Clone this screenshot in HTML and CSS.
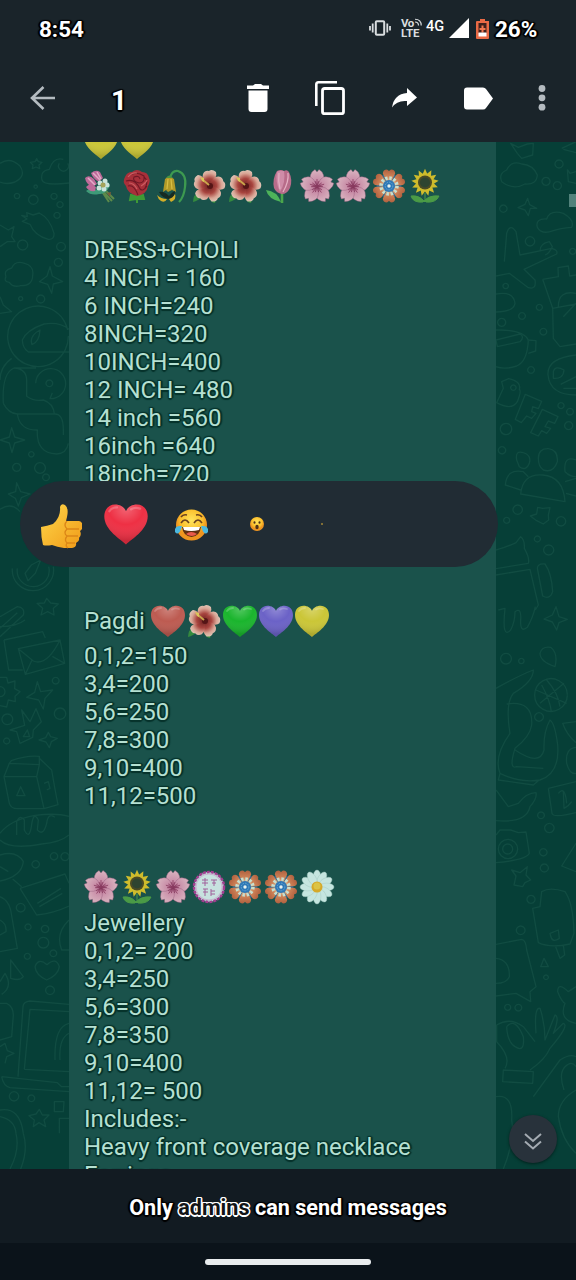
FILE: index.html
```
<!DOCTYPE html>
<html lang="en">
<head>
<meta charset="utf-8">
<title>Chat</title>
<link rel="stylesheet" href="styles.css">
</head>
<body>
<svg class="defs" width="0" height="0" aria-hidden="true">
  <defs>
    <radialGradient id="shine" cx=".5" cy=".1" r=".8"><stop offset="0" stop-color="#fff" stop-opacity=".25"/><stop offset=".5" stop-color="#fff" stop-opacity="0"/><stop offset="1" stop-color="#000" stop-opacity=".15"/></radialGradient>
    <linearGradient id="skin" x2="1" y2="1"><stop offset="0" stop-color="#ffd84a"/><stop offset="1" stop-color="#f09a18"/></linearGradient>
    <radialGradient id="face" cy=".35"><stop offset="0" stop-color="#ffe45c"/><stop offset=".7" stop-color="#fbc02d"/><stop offset="1" stop-color="#ee9420"/></radialGradient>
    <radialGradient id="pinkPetal" cx=".5" cy="1" r="1"><stop offset="0" stop-color="#a0527a"/><stop offset=".4" stop-color="#c98ea8"/><stop offset="1" stop-color="#d9b4c0"/></radialGradient>
    <radialGradient id="redPetal" cx=".5" cy="1" r="1"><stop offset="0" stop-color="#5e1719"/><stop offset=".5" stop-color="#a8453f"/><stop offset=".8" stop-color="#d9a595"/><stop offset="1" stop-color="#dfc3b4"/></radialGradient>
    <linearGradient id="orangePetal" y2="1" x2="0"><stop offset="0" stop-color="#b0603f"/><stop offset=".6" stop-color="#cf8458"/><stop offset="1" stop-color="#dcc09c"/></linearGradient>
  </defs>
  <symbol id="heart" viewBox="0 0 36 36">
    <path d="M18 34C14.500 30.500 1 23 1 12C1 6.500 4.500 2.800 9.500 2.800C13.500 2.800 16.800 5 18 8C19.200 5 22.500 2.800 26.500 2.800C31.500 2.800 35 6.500 35 12C35 23 21.500 30.500 18 34Z" fill="currentColor"/>
    <path d="M18 34C14.500 30.500 1 23 1 12C1 6.500 4.500 2.800 9.500 2.800C13.500 2.800 16.800 5 18 8C19.200 5 22.500 2.800 26.500 2.800C31.500 2.800 35 6.500 35 12C35 23 21.500 30.500 18 34Z" fill="url(#shine)"/>
    <path d="M5 8Q7 5 11 5M22 6.500Q25 4.500 29 6" fill="none" stroke="#fff" stroke-opacity=".22" stroke-width="1.800" stroke-linecap="round"/>
  </symbol>
  <symbol id="bouquet" viewBox="0 0 36 36">
    <path d="M17 20L29 33M18 22L26 34M20 20L31 31" stroke="#5c8a4a" stroke-width="2"/>
    <path d="M24 25L28 24L27 29Z" fill="#7c5b3b"/>
    <path d="M3 23Q9 18 13 22L25 14L27 18Q22 27 16 26Q8 28 3 23Z" fill="#3f9a78"/>
    <path d="M8 5Q13 1 17 4L20 10L16 14Q10 11 8 5ZM2 10Q6 6 11 11L14 16L9 19Q3 16 2 10ZM3 19Q7 14 13 19L12 23Q6 24 3 19Z" fill="#bd6a99"/>
    <path d="M10 5L17 12M5 10L12 17M14 4L18 11" stroke="#e3abc7" stroke-width="1.500"/>
    <g fill="#c9e3da"><circle cx="17" cy="15" r="2.500"/><circle cx="22" cy="13" r="2.500"/><circle cx="24" cy="17" r="2.500"/><circle cx="21" cy="21" r="2.500"/><circle cx="16" cy="20" r="2.500"/></g>
    <circle cx="20" cy="17" r="2.500" fill="#a4a35a"/>
  </symbol>
  <symbol id="rose" viewBox="0 0 36 36">
    <path d="M18 25V35M17 31L11 32L12 27L17 28L24 27L25 31L19 31" fill="#3f9a35" stroke="#3f9a35" stroke-width="2"/>
    <path d="M6 9Q8 4 13 4Q18 0 23 4Q29 4 30 10Q32 13 29 18Q28 26 18 28Q8 25 7 18Q3 14 6 9Z" fill="#a8303a"/>
    <path d="M7 13Q16 10 21 21Q24 24 28 18M11 7Q18 3 25 8Q26 15 20 15Q13 13 15 9Q20 7 21 11M9 18Q15 16 19 27M25 9Q30 13 26 20" fill="none" stroke="#711825" stroke-width="1.100"/>
    <path d="M9 9Q13 4 18 5M22 18Q27 15 28 12M10 15Q15 15 18 21" stroke="#cc5c60" stroke-width="1.200" fill="none"/>
  </symbol>
  <symbol id="wilted" viewBox="0 0 36 36">
    <path d="M15 10Q17 2 23 3Q32 6 30 19Q29 29 24 34" fill="none" stroke="#3d9a50" stroke-width="2.200"/>
    <path d="M10 11Q14 7 19 11L21 24L17 22L13 24L11 22L8 24Z" fill="#b29a27"/>
    <path d="M13 11L12 21M16 11L17 21" stroke="#d7bf45" stroke-width="1.200"/>
    <path d="M4 24Q9 23 14 28Q17 24 20 23Q20 30 14 31Q7 30 4 24Z" fill="#172b22"/>
    <path d="M2 27Q6 31 12 31Q10 35 6 33Q3 31 2 27ZM14 31Q18 30 20 26Q22 31 16 34Z" fill="#d3ae28"/>
    <path d="M11 10Q14 5 18 10Z" fill="#4a9441"/>
  </symbol>
  <symbol id="hibiscus" viewBox="0 0 36 36">
    <path d="M2 34Q2 26 9 24L12 28Q7 33 2 34ZM18 29L26 29L24 35Q20 35 18 29Z" fill="#358a3f"/>
    <g fill="url(#redPetal)"><path id="hp" d="M18 19Q10 11 12 6Q14 2 18 3Q21 .500 25 4Q27 9 18 19Z"/>
    <use href="#hp" transform="rotate(72 18 18)"/><use href="#hp" transform="rotate(144 18 18)"/><use href="#hp" transform="rotate(216 18 18)"/><use href="#hp" transform="rotate(288 18 18)"/></g>
    <circle cx="19" cy="18" r="3" fill="#541516"/><path d="M18 17L12 12" stroke="#caa34b" stroke-width="2"/><path d="M9 9L13 10L13 14L11 13Z" fill="#dac75a"/>
  </symbol>
  <symbol id="tulip" viewBox="0 0 36 36">
    <path d="M19 23V35" stroke="#4aa64b" stroke-width="2.600"/><path d="M18 34Q5 31 3 22Q14 23 18 34Z" fill="#4db35a"/>
    <path d="M14 3Q18 1 21 3Q24 1 26 4Q30 12 27 20Q24 26 19 26Q13 25 11 20Q9 11 14 3Z" fill="#b86c8a"/>
    <path d="M14 4Q12 13 17 24Q23 14 21 3Q16 2 14 4Z" fill="#cf8ca8"/><path d="M16 5Q15 13 17 21M25 5Q26 14 20 24" stroke="#e5b0c3" fill="none" stroke-width="1.200"/>
  </symbol>
  <symbol id="blossom" viewBox="0 0 36 36">
    <g fill="url(#pinkPetal)" stroke="#92587a" stroke-width=".4"><path id="bp" d="M18 19Q9.500 12 11.500 7Q13 3 16 1.500L18 4L20 1.500Q23 3 24.500 7Q26.500 12 18 19Z"/>
    <use href="#bp" transform="rotate(72 18 18.500)"/><use href="#bp" transform="rotate(144 18 18.500)"/><use href="#bp" transform="rotate(216 18 18.500)"/><use href="#bp" transform="rotate(288 18 18.500)"/></g>
    <g stroke="#843459" stroke-width=".7"><path id="bs" d="M18 18V11M18 18L16 13M18 18L20 13"/><use href="#bs" transform="rotate(72 18 18.500)"/><use href="#bs" transform="rotate(144 18 18.500)"/><use href="#bs" transform="rotate(216 18 18.500)"/><use href="#bs" transform="rotate(288 18 18.500)"/></g>
  </symbol>
  <symbol id="rosette" viewBox="0 0 36 36">
    <circle cx="18" cy="18" r="12.500" fill="#36698c"/>
    <g fill="url(#orangePetal)"><path id="op" d="M16 14L11.800 5.500Q12 1.500 16 1.500L18 3L20 1.500Q24 1.500 24.200 5.500L20 14Z"/>
    <use href="#op" transform="rotate(60 18 18)"/><use href="#op" transform="rotate(120 18 18)"/><use href="#op" transform="rotate(180 18 18)"/><use href="#op" transform="rotate(240 18 18)"/><use href="#op" transform="rotate(300 18 18)"/></g>
    <circle cx="18" cy="18" r="8" fill="none" stroke="#c8dfce" stroke-width="3.500" stroke-dasharray="2.400 1.800"/>
    <circle cx="18" cy="18" r="6" fill="#2e78b7"/><circle cx="18" cy="18" r="3.800" fill="none" stroke="#68a9cf" stroke-dasharray="1.500 1"/><circle cx="18" cy="18" r="1.700" fill="#e8f3ef"/>
  </symbol>
  <symbol id="sunflower" viewBox="0 0 36 36">
    <path d="M18 25V34M16 34Q6 35 4 28Q12 27 17 33Q22 27 32 28Q29 35 19 34" fill="#4a9a46" stroke="#4a9a46"/>
    <g fill="#cfbc2c"><path id="sp" d="M14.800 8L18 .800L21.200 8L18 15Z"/><use href="#sp" transform="rotate(27.700 18 14.500)"/><use href="#sp" transform="rotate(55.400 18 14.500)"/><use href="#sp" transform="rotate(83 18 14.500)"/><use href="#sp" transform="rotate(110.800 18 14.500)"/><use href="#sp" transform="rotate(138.500 18 14.500)"/><use href="#sp" transform="rotate(166 18 14.500)"/><use href="#sp" transform="rotate(194 18 14.500)"/><use href="#sp" transform="rotate(221.500 18 14.500)"/><use href="#sp" transform="rotate(249 18 14.500)"/><use href="#sp" transform="rotate(277 18 14.500)"/><use href="#sp" transform="rotate(304.600 18 14.500)"/><use href="#sp" transform="rotate(332 18 14.500)"/></g>
    <circle cx="18" cy="14.500" r="7" fill="#4b4b25"/><circle cx="18" cy="14.500" r="5" fill="#2e4430"/>
  </symbol>
  <symbol id="stamp" viewBox="0 0 36 36">
    <circle cx="18" cy="18" r="15" fill="#bed9d9" stroke="#a33f91" stroke-width="2.500" stroke-dasharray="3 1"/>
    <circle cx="18" cy="18" r="13" fill="#c7e2df" stroke="#c9a9cb" stroke-width=".8"/>
    <path d="M11 11H17M14 9V17M11 14H17M20 11H26M21 14H25M23 11V17M12 20H17M12 23H17M14 20V27M20 20V27M20 22H24M20 25H24" fill="none" stroke="#a0609a" stroke-width="1"/>
  </symbol>
  <symbol id="daisy" viewBox="0 0 36 36">
    <circle cx="18" cy="18" r="12" fill="#a9cfc8"/>
    <g fill="#c5e5df" stroke="#9fc6be" stroke-width=".4"><ellipse id="d1" cx="18" cy="8.500" rx="3.900" ry="7.500"/><use href="#d1" transform="rotate(30 18 18)"/><use href="#d1" transform="rotate(60 18 18)"/><use href="#d1" transform="rotate(90 18 18)"/><use href="#d1" transform="rotate(120 18 18)"/><use href="#d1" transform="rotate(150 18 18)"/><use href="#d1" transform="rotate(180 18 18)"/><use href="#d1" transform="rotate(210 18 18)"/><use href="#d1" transform="rotate(240 18 18)"/><use href="#d1" transform="rotate(270 18 18)"/><use href="#d1" transform="rotate(300 18 18)"/><use href="#d1" transform="rotate(330 18 18)"/></g>
    <circle cx="18" cy="18" r="5.500" fill="#d5a929"/><circle cx="18" cy="17" r="3.500" fill="#dcc344"/>
  </symbol>
</svg>

<div class="screen">
  <header class="top">
    <div class="status">
      <span class="clock">8:54</span>
      <div class="status-icons">
        <svg class="vibrate" viewBox="0 0 22 16"><g fill="none" stroke="#d9dddf"><rect x="6.800" y="1.300" width="8.400" height="13.400" rx="1" stroke-width="2"/><path d="M3.700 3.500V12.500M18.300 3.500V12.500M1 6V10.500M21 6V10.500" stroke-width="1.800"/></g></svg>
        <span class="volte"><span class="vo">Vo<svg viewBox="0 0 9 9"><path d="M0 1Q8 1 8 9M0 4.500Q4.500 4.500 4.500 9" fill="none" stroke="currentColor" stroke-width="1.500"/></svg></span><span>LTE</span></span>
        <span class="net">4G</span>
        <svg class="signal" viewBox="0 0 20 20"><path d="M20 0V20H0Z" fill="#fff"/></svg>
        <svg class="battery" viewBox="0 0 13 21"><path d="M4 1H9V3H13V20Q13 21 12 21H1Q0 21 0 20V4Q0 3 1 3H4Z" fill="#e96a45"/><path d="M2.500 5H10.500V15H2.500Z" fill="#40201b"/><path d="M6.500 7.500V14.500M3.500 11H9.500" stroke="#f17850" stroke-width="2"/><path d="M2.500 14.500H10.500V18.500H2.500Z" fill="#fff"/></svg>
        <span class="percent">26%</span>
      </div>
    </div>
    <div class="toolbar">
      <svg class="back" viewBox="0 0 26 26"><path d="M25 13H2M13.500 2L2 13L13.500 24" fill="none" stroke="#b4bbc0" stroke-width="2.600"/></svg>
      <span class="count">1</span>
      <svg class="trash" viewBox="0 0 22 28"><path d="M0 1.500H6L8 0H14L16 1.500H22V5H0ZM1.500 6.500H20.500V25Q20.500 28 17.500 28H4.500Q1.500 28 1.500 25Z" fill="#fff"/></svg>
      <svg class="copy" viewBox="0 0 30 34"><path d="M22 1.300H3.500Q1.300 1.300 1.300 3.500V25" fill="none" stroke="#fff" stroke-width="2.600"/><rect x="7.500" y="7.500" width="21" height="25.200" rx="2.300" fill="none" stroke="#fff" stroke-width="2.800"/></svg>
      <svg class="forward" viewBox="0 0 25 20"><path d="M15 0L25 9.500L15 18V13Q5 12 0 19.500Q2 6 15 5Z" fill="#fff"/></svg>
      <svg class="label" viewBox="0 0 29 23"><path d="M3 .500H19Q21 .500 22 2L29 11.500L22 21Q21 22.500 19 22.500H3Q0 22.500 0 19.500V3.500Q0 .500 3 .500Z" fill="#fff"/></svg>
      <svg class="more" viewBox="0 0 8 26"><g fill="#b4bbc0"><circle cx="4" cy="3.500" r="3.400"/><circle cx="4" cy="12.800" r="3.400"/><circle cx="4" cy="22.200" r="3.400"/></g></svg>
    </div>
  </header>

  <main class="chat">
    <svg class="doodles" viewBox="0 6 207 3081" preserveAspectRatio="none">
      <path d="M0 70Q30 50 60 78Q80 108 45 126Q20 135 0 126M126 120Q120 92 148 88Q160 50 190 58M126 120Q130 138 207 129M178 70a15 15 0 1 0 25 0M80 218L99 225L118 219Q150 235 162 280Q163 300 145 298Q104 288 90 253L67 244L81 237L65 226L82 230ZM18 410Q10 390 35 384Q45 360 74 370Q103 378 98 406Q98 438 62 437Q38 443 28 427Q10 425 18 410M205 588A91 91 0 1 1 203 570M207 568Q180 545 132 552Q80 570 67 600Q68 625 85 636H207M94 606Q92 585 120 570Q118 606 96 614ZM107 730A45 45 0 1 1 150 776L157 758M10 790Q5 700 42 684Q80 686 80 722V769Q102 785 130 780Q160 790 163 822H52Q25 820 10 790M0 720Q0 680 35 655M42 684H108M52 822Q60 872 112 870Q108 940 170 942Q200 940 205 910M163 822Q190 820 190 870V885M35 863L44 891L74 900L44 909L36 938L28 909L0 900L28 891ZM150 380L157 408L188 425L160 432L155 460L143 433L118 425L141 408ZM50 1028L62 1055L90 1062L64 1073L55 1098L46 1075L25 1062L47 1055ZM0 1108Q35 1085 60 1115M37 1285A62 62 0 1 0 160 1280M52 1285A48 48 0 1 0 146 1280M75 1300L94 1275L122 1260L106 1300L84 1322ZM140 1375L152 1389L175 1392L160 1405L162 1425L143 1415L123 1425L128 1405L111 1390L133 1389ZM0 1430L52 1400Q76 1402 70 1425L0 1490M0 1465L52 1418M0 1460Q50 1460 75 1440M12 1500L128 1475L136 1494M12 1500L26 1590L68 1590M55 1526L180 1500L194 1570L76 1603ZM55 1526L100 1563Q140 1580 180 1500M76 1603L96 1560M194 1570L157 1549M0 1612L20 1612L24 1629L45 1623L44 1646L60 1655L45 1669L46 1685L25 1680L20 1701L0 1697M0 1640a15 15 0 1 1 0 30M112 1625L122 1655L158 1650L135 1675L130 1707L116 1680L80 1672L104 1657ZM65 1710L90 1745L108 1706L124 1745L100 1770L98 1792L60 1810L50 1775L30 1770L74 1756ZM82 1770L70 1790H89ZM145 1777L152 1790L172 1795L154 1805L148 1823L138 1806L117 1800L137 1793ZM34 1862Q80 1845 118 1849V1874L28 1870ZM28 1870L12 1910L28 1990Q33 2007 55 2006H132L110 1910H12M118 1874L110 1910M118 1855L155 1890Q165 1950 174 1994L132 2006M62 1940L50 1967H75ZM132 1930L145 1925L150 1945L140 1950M0 2080Q30 2040 105 2026Q170 2018 207 2029M0 2100Q30 2130 125 2112Q180 2108 207 2085M50 2085V2045Q60 2022 73 2040V2070Q88 2100 94 2060Q100 2010 115 2040L112 2070Q130 2090 140 2050Q144 2016 165 2032M0 2145Q50 2130 70 2165Q65 2210 0 2223M0 2180L25 2195M38 2217L65 2240M60 2245L195 2202L207 2230M60 2245L110 2325Q160 2320 207 2298M112 2290L183 2245M118 2300L187 2260M0 2270Q25 2280 32 2310L52 2425L0 2435M0 2340Q20 2350 18 2375L0 2385M207 2340Q165 2380 185 2430L207 2430M32 2460L70 2510Q60 2524 32 2515ZM105 2480Q115 2452 141 2474Q168 2450 178 2480Q175 2505 140 2520Q107 2505 105 2480M0 2525L15 2500Q40 2540 5 2563M0 2590L20 2590Q40 2600 40 2625L35 2690L0 2700M54 2810L69 2600Q70 2585 90 2583L207 2593M73 2788L90 2608L207 2615M73 2788L207 2795M165 2760Q162 2660 207 2650M180 2760Q176 2695 207 2680M5 2810L172 2828L185 2840H207M5 2810Q10 2838 30 2843L207 2855M0 2910Q60 2900 70 2980M0 2930Q45 2940 48 2980M118 2908L127 2925L147 2925L132 2940L137 2960L117 2948L100 2960L103 2940L87 2927L108 2922ZM163 2915V2885H192L190 2915ZM178 2980V2935H207M0 255L25 270L42 260L35 290L45 305L22 305L0 320M0 470L10 495L35 515L0 520M0 2720L15 2710L22 2732L42 2740L20 2750L15 2770M48 2980Q60 3030 30 3087M70 2980Q85 3030 62 3087"/>
      <path d="M105 65l5-9 5 9 11 2-9 8 2 11-11-5-11 5 2-11-8-8zM51 160a8 8 0 1 0 .1 0M100 165a14 14 0 1 0 .1 0M107 135a5 5 0 1 0 .1 0M162 160a9 9 0 1 0 .1 0M180 185a9 9 0 1 0 .1 0M171 217a9 9 0 1 0 .1 0M68 300a15 15 0 1 0 .1 0M183 307a13 13 0 1 0 .1 0M175 355a12 12 0 1 0 .1 0M122 465a12 12 0 1 0 .1 0M62 470a6 6 0 1 0 .1 0M50 970a12 12 0 1 0 .1 0M120 968a16 16 0 1 0 .1 0M138 1002a10 10 0 1 0 .1 0M94 935a8 8 0 1 0 .1 0M22 1722a16 16 0 1 0 .1 0M180 1704a17 17 0 1 0 .1 0M167 1612a10 10 0 1 0 .1 0M20 1794a9 9 0 1 0 .1 0M107 2162a11 11 0 1 0 .1 0M162 2138a11 11 0 1 0 .1 0M195 2138a12 12 0 1 0 .1 0M62 2290a13 13 0 1 0 .1 0M84 2352a9 9 0 1 0 .1 0M135 2356a11 11 0 1 0 .1 0M130 2392a16 16 0 1 0 .1 0M160 2430a10 10 0 1 0 .1 0M82 2440a9 9 0 1 0 .1 0M150 2538a13 13 0 1 0 .1 0M42 2855a14 14 0 1 0 .1 0M94 2865a10 10 0 1 0 .1 0M148 720a10 10 0 1 0 .1 0"/>
    </svg>
    <article class="bubble">
      <div class="emoji-row first"><svg class="yellow"><use href="#heart"/></svg><svg class="yellow"><use href="#heart"/></svg></div>
      <div class="emoji-row"><svg><use href="#bouquet"/></svg><svg><use href="#rose"/></svg><svg><use href="#wilted"/></svg><svg><use href="#hibiscus"/></svg><svg><use href="#hibiscus"/></svg><svg><use href="#tulip"/></svg><svg><use href="#blossom"/></svg><svg><use href="#blossom"/></svg><svg><use href="#rosette"/></svg><svg><use href="#sunflower"/></svg></div>
      <div class="lines dress">
        <p>DRESS+CHOLI</p><p>4 INCH = 160</p><p>6 INCH=240</p><p>8INCH=320</p><p>10INCH=400</p><p>12 INCH= 480</p><p>14 inch =560</p><p>16inch =640</p><p>18inch=720</p>
      </div>
      <div class="emoji-row pagdi"><span>Pagdi</span><svg class="red"><use href="#heart"/></svg><svg><use href="#hibiscus"/></svg><svg class="green"><use href="#heart"/></svg><svg class="purple"><use href="#heart"/></svg><svg class="yellow"><use href="#heart"/></svg></div>
      <div class="lines">
        <p>0,1,2=150</p><p>3,4=200</p><p>5,6=250</p><p>7,8=300</p><p>9,10=400</p><p>11,12=500</p>
      </div>
      <div class="emoji-row jewels"><svg><use href="#blossom"/></svg><svg><use href="#sunflower"/></svg><svg><use href="#blossom"/></svg><svg><use href="#stamp"/></svg><svg><use href="#rosette"/></svg><svg><use href="#rosette"/></svg><svg><use href="#daisy"/></svg></div>
      <div class="lines">
        <p>Jewellery</p><p>0,1,2= 200</p><p>3,4=250</p><p>5,6=300</p><p>7,8=350</p><p>9,10=400</p><p>11,12= 500</p><p>Includes:-</p><p>Heavy front coverage necklace</p><p>Earrings</p>
      </div>
    </article>
    <svg class="doodles" viewBox="18 6 240 3081" preserveAspectRatio="none">
      <path d="M62 10L85 22L112 12L130 10L128 45L95 55L82 40ZM215 25L258 5M220 28L258 38M35 125Q25 100 50 90Q65 60 95 72Q130 75 142 105Q140 135 105 132Q70 152 35 125M142 262Q135 235 170 237Q180 208 220 220Q255 240 245 262Q210 265 190 272Q155 285 142 262M232 88L240 100L258 95M232 88L235 125L258 130M113 175L119 194L140 205L121 205L115 227L105 210L84 203L105 193ZM43 365L50 280Q60 248 78 275L90 345L185 325Q205 330 200 342L102 388L135 420Q140 450 115 443L58 400L18 408M150 333Q150 310 178 305L187 320Q178 340 165 345M158 418L205 410L204 383L235 378L239 408L258 405M158 418L188 505L190 595L210 620L258 612M188 505L258 492M205 500Q205 450 258 460M220 530L258 490M18 462Q70 452 75 490Q72 515 18 516M18 570Q100 568 115 600Q112 665 80 678Q45 690 18 680M112 600L138 602L137 633L115 640M22 620L18 600L90 582Q105 590 90 605ZM258 645Q170 655 174 705Q180 765 258 765M190 695Q195 675 222 690Q220 718 190 715ZM212 733L258 710M220 745L258 745M35 725L56 716Q95 725 88 748Q95 752 82 785Q65 813 20 788L40 745ZM106 763L155 784L145 806L128 800L125 815L138 820L125 835L110 828L94 848L76 838ZM157 808L204 830L194 850L175 843L165 860L182 865L170 880L155 872L145 888L122 878ZM80 960Q75 930 100 938Q125 945 118 970Q108 995 88 980ZM145 955Q145 925 175 926Q205 930 202 965Q190 1000 160 990Q145 980 145 955M92 1062Q98 1000 158 1005Q220 1010 225 1085ZM92 1050L46 1035Q50 985 100 995L115 1010M258 960Q220 945 225 995Q240 1010 258 1010M225 1025L258 1015M228 1060L258 1068M143 1102L158 1105L180 1103L175 1125L176 1140L160 1152L140 1142L121 1128L140 1122ZM18 1230Q65 1215 78 1208L92 1190Q105 1200 103 1225Q120 1255 115 1270L18 1286M18 1305L120 1288L145 1395L136 1410M25 1410L45 1405Q35 1500 62 1470Q75 1445 75 1415Q95 1400 92 1440Q90 1480 112 1462Q130 1430 136 1400M143 1290Q138 1270 165 1272Q185 1300 188 1355Q180 1380 158 1368ZM198 1400L207 1430L232 1438L207 1448L200 1470L187 1446L162 1437L187 1425ZM150 1540Q155 1518 182 1522Q205 1540 195 1580Q150 1565 150 1540M232 1666A49 49 0 1 1 232 1664M138 1650L230 1690M150 1690Q180 1665 222 1630M170 1620Q205 1660 210 1700M155 1635Q180 1680 184 1715M18 1645Q90 1605 130 1590Q130 1625 70 1660Q45 1690 60 1780Q10 1850 30 1900Q90 1930 150 1920Q210 1900 203 1815Q195 1750 180 1740Q160 1775 162 1830Q150 1880 75 1830M50 1692Q130 1680 125 1755Q120 1790 75 1825Q55 1890 80 1880L160 1885M30 1900L25 1920L130 1935L145 1922M258 1745L218 1750Q230 1785 258 1808M258 1822Q225 1825 230 1870Q240 1905 258 1900M175 1945L258 1925M175 1945L186 2020Q190 2035 258 2018M205 1960Q225 1935 230 1990M220 1955L222 2005Q235 2000 245 1985M18 1950L55 2000L85 1990Q110 1958 138 1958Q142 1975 120 2000Q110 2050 18 2042M18 2085L30 2070H62L85 2078L108 2076L118 2140Q110 2160 18 2168M25 2127A29 29 0 1 0 83 2127A29 29 0 1 0 25 2127M38 2127A15 15 0 1 0 68 2127A15 15 0 1 0 38 2127M258 2110L215 2178L258 2195M65 2190L90 2198L112 2180L108 2205L122 2220L105 2228L98 2240L72 2235L78 2208ZM155 2255Q180 2240 225 2255Q250 2290 252 2380L240 2412Q180 2425 145 2408L128 2305L150 2300ZM180 2380L205 2370L208 2395Q187 2410 182 2388ZM197 2420L210 2455L224 2445L220 2415M18 2413L95 2398Q108 2400 110 2430L138 2540L120 2555L122 2585L78 2560L18 2568M18 2455Q60 2460 58 2510Q50 2530 18 2530M258 2540L235 2555Q203 2525 203 2555Q215 2585 225 2590Q205 2640 258 2650M45 2785Q65 2752 20 2705V2655Q60 2630 100 2660L135 2705M50 2660Q75 2630 100 2690Q105 2740 75 2720Q52 2705 50 2660M138 2680Q132 2600 150 2605Q165 2650 165 2700L195 2625Q210 2630 190 2680L220 2650Q240 2655 180 2725Q165 2760 120 2790M40 2790L130 2795L128 2830L38 2825ZM130 2870L210 2760Q240 2740 258 2750M222 2850Q205 2800 225 2780Q245 2760 258 2780M18 2870Q70 2860 65 2940M205 2930Q205 2880 258 2850M65 2940Q75 3000 40 3087M205 2930Q215 3000 258 3040"/>
      <path d="M207 60a12 12 0 1 0 .1 0M168 112a12 12 0 1 0 .1 0M202 125a12 12 0 1 0 .1 0M40 195a11 11 0 1 0 .1 0M120 290a14 14 0 1 0 .1 0M248 325a9 9 0 1 0 .1 0M47 430a8 8 0 1 0 .1 0M148 493a9 9 0 1 0 .1 0M96 518a10 10 0 1 0 .1 0M35 535a12 12 0 1 0 .1 0M160 565a10 10 0 1 0 .1 0M123 680a10 10 0 1 0 .1 0M213 788a9 9 0 1 0 .1 0M240 805a10 10 0 1 0 .1 0M236 845a12 12 0 1 0 .1 0M48 850a17 17 0 1 0 .1 0M36 920a11 11 0 1 0 .1 0M83 1095a14 14 0 1 0 .1 0M50 1132a9 9 0 1 0 .1 0M213 1130a14 14 0 1 0 .1 0M142 1188a9 9 0 1 0 .1 0M176 1215a15 15 0 1 0 .1 0M48 1540a16 16 0 1 0 .1 0M94 1555a8 8 0 1 0 .1 0M147 1718a13 13 0 1 0 .1 0M153 2016a10 10 0 1 0 .1 0M178 2050a14 14 0 1 0 .1 0M160 2126a11 11 0 1 0 .1 0M163 2172a12 12 0 1 0 .1 0M123 2266a12 12 0 1 0 .1 0M92 2358a13 13 0 1 0 .1 0M162 2455l-10 25h23zM168 2505a7 7 0 1 0 .1 0M53 2593a9 9 0 1 0 .1 0M85 2593a10 10 0 1 0 .1 0M70 735a8 8 0 1 0 .1 0"/>
    </svg>

    <div class="reactions">
      <svg class="thumb" viewBox="0 0 41 45"><path d="M0 23Q6 22 12 20Q20 13 19 3Q20-1 24 1Q28 4 26 13L25 17H38Q42 18 41 22Q42 25 39 27Q41 31 38 34Q39 37 35 39Q36 43 31 44H23Q16 43 11 41Q5 42 2 41Q0 33 0 23Z" fill="url(#skin)"/><path d="M26 17Q22 21 26 25H38M26 25Q22 29 26 32H37M26 32Q23 36 26 39H34M26 39Q24 42 27 44" fill="none" stroke="#db8617" stroke-width="1.300"/></svg>
      <svg class="love"><use href="#heart"/></svg>
      <svg class="joy" viewBox="0 0 33 33"><circle cx="16.500" cy="16" r="15.500" fill="url(#face)"/><path d="M6 14Q10 8 14 14M19 14Q23 8 27 14M6 8Q8 5 12 6M21 6Q25 5 27 8" fill="none" stroke="#69401f" stroke-width="1.600"/><path d="M7 18H26Q25 27 16.500 28Q8 27 7 18Z" fill="#603010"/><path d="M8 18H25L24 21Q16 23 9 21Z" fill="#fff"/><path d="M11 25Q16 21 22 25Q17 29 11 25Z" fill="#e95a4b"/><path d="M7 17Q-1 16 0 23Q4 28 7 17ZM26 17Q34 16 33 23Q29 28 26 17Z" fill="#4bb8df"/></svg>
      <svg class="wow" viewBox="0 0 14 14"><circle cx="7" cy="7" r="7" fill="url(#face)"/><ellipse cx="4.500" cy="5.500" rx="1" ry="1.300" fill="#4e3018"/><ellipse cx="9.500" cy="5.500" rx="1" ry="1.300" fill="#4e3018"/><ellipse cx="7" cy="10" rx="1.700" ry="2.300" fill="#4e3018"/></svg>
      <svg class="speck" viewBox="0 0 2 2"><circle cx="1" cy="1" r="1" fill="#a08436"/></svg>
    </div>
    <div class="scroll-thumb"></div>
    <div class="jump"><svg viewBox="0 0 18 17"><path d="M1 1L9 8L17 1M1 8.500L9 15.500L17 8.500" fill="none" stroke="#a4abb2" stroke-width="2"/></svg></div>
  </main>

  <footer class="notice"><p>Only <span class="admins">admins</span> can send messages</p></footer>
  <div class="nav"><div class="pill"></div></div>
</div>
</body>
</html>
```
FILE: styles.css
```
* { box-sizing: border-box; }
body { margin: 0; background: #0b141b; font-family: Roboto, "Liberation Sans", sans-serif; }
p { margin: 0; }
svg { display: block; flex: none; }
.defs { position: absolute; }
.screen { width: 576px; height: 1280px; display: flex; flex-direction: column; overflow: hidden; }

.top { height: 142px; flex: none; background: #1a242a; color: #fff; }
.status { height: 56px; display: flex; justify-content: space-between; align-items: center; padding: 0 39px; }
.clock, .percent, .count, .notice { text-shadow: 1px 1px 1px #000, -1px -1px 1px #000, 1px -1px 1px #000, -1px 1px 1px #000, 0 2px 1px #000, 2px 0 1px #000, -2px 0 1px #000; }
.clock, .percent { font-size: 22.400px; font-weight: 700; line-height: 56px; padding-top: 1px; }
.status-icons { display: flex; align-items: center; }
.vibrate { width: 22px; height: 16px; }
.volte { display: flex; flex-direction: column; width: 21px; margin-left: 10px; color: #d9dddf; font-size: 11.500px; font-weight: 700; line-height: 10px; }
.vo { display: flex; letter-spacing: -.5px; }
.vo svg { width: 7px; height: 8px; margin-left: 1px; }
.net { width: 19px; margin: -3px 0 0 4px; font-size: 14.500px; font-weight: 500; }
.signal { width: 20px; height: 20px; margin-left: 4px; }
.battery { width: 13px; height: 21px; margin-left: 7px; }
.percent { width: 42px; margin-left: 6px; }
.toolbar { height: 86px; display: flex; align-items: center; padding: 0 30px 2px; }
.back { width: 26px; height: 26px; }
.count { width: 17px; margin-left: 55px; font-size: 28px; font-weight: 700; padding-top: 4px; }
.trash { width: 22px; height: 28px; margin-left: 119px; }
.copy { width: 30px; height: 34px; margin-left: 46px; }
.forward { width: 25px; height: 20px; margin-left: 47px; }
.label { width: 29px; height: 23px; margin-left: 47px; }
.more { width: 8px; height: 26px; margin-left: 45px; }

.chat { position: relative; height: 1027px; flex: none; display: grid; grid-template-columns: 69px 427px 80px; background: #063f37; overflow: hidden; }
.doodles { width: 100%; height: 1027px; }
.doodles path { fill: none; stroke: #114c42; stroke-width: 4; stroke-linejoin: round; }
.bubble { background: #1a524b; padding-left: 15px; height: 1027px; overflow: hidden; color: #b5e0d2; font-size: 24px; line-height: 28px; white-space: nowrap; text-shadow: 1px 1px 1px #07332c, -1px -1px 1px #07332c, 1px -1px 1px #07332c, -1px 1px 1px #07332c, 0 2px 1px #07332c, 2px 0 1px #07332c; }
.bubble p { height: 28px; }
.emoji-row { display: flex; align-items: center; height: 36px; margin-left: -1px; }
.emoji-row svg { width: 36px; height: 36px; }
.emoji-row.first { margin-top: -17px; margin-bottom: 7px; }
.dress { margin-top: 32px; }
.pagdi { margin: 115px 0 3px 0; }
.pagdi span { width: 66px; }
.jewels { margin-top: 59px; margin-bottom: 4px; }
.yellow { color: #cbc637; }
.red { color: #bd5b51; }
.green { color: #1ab52d; }
.purple { color: #6b62c7; }

.reactions { position: absolute; left: 20px; top: 339px; width: 478px; height: 86px; border-radius: 43px; background: #212c34; display: flex; align-items: center; padding-left: 21px; }
.thumb { width: 41px; height: 45px; margin-top: 4px; }
.love { width: 46px; height: 46px; margin-left: 21px; color: #ee3044; }
.joy { width: 33px; height: 33px; margin-left: 26px; margin-top: 2px; }
.wow { width: 14px; height: 14px; margin-left: 42px; }
.speck { width: 2px; height: 2px; margin-left: 57px; }
.scroll-thumb { position: absolute; right: 0; top: 52px; width: 7px; height: 13px; background: #52827b; }
.jump { position: absolute; left: 509px; top: 973px; width: 48px; height: 48px; border-radius: 50%; background: #28323b; display: flex; align-items: center; justify-content: center; box-shadow: 0 1px 3px #00221c; }
.jump svg { width: 18px; height: 17px; margin-top: 4px; }

.notice { height: 74px; flex: none; background: #121b22; display: flex; align-items: center; justify-content: center; padding-top: 2px; color: #fff; font-size: 21.600px; font-weight: 700; }
.admins { color: #121417; text-shadow: 1px 1px 0 #fff, -1px -1px 0 #fff, 1px -1px 0 #fff, -1px 1px 0 #fff, 1.5px 0 0 #fff, -1.5px 0 0 #fff, 0 1.5px 0 #fff, 0 -1.5px 0 #fff; }
.nav { height: 37px; flex: none; background: #0b131a; display: flex; justify-content: center; padding-top: 16px; }
.pill { width: 166px; height: 6px; border-radius: 3px; background: #e9ecee; }
```
